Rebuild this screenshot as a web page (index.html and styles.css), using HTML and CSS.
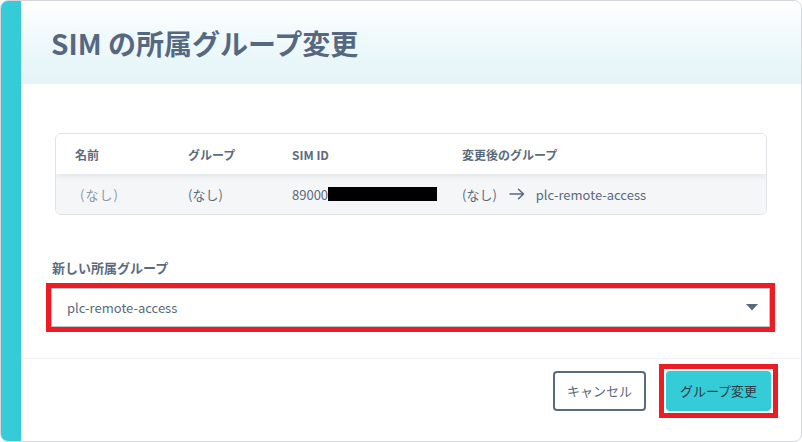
FILE: index.html
```html
<!DOCTYPE html>
<html lang="ja">
<head>
<meta charset="utf-8">
<title>SIM の所属グループ変更</title>
<link rel="stylesheet" href="styles.css">
</head>
<body>
<div class="modal">
  <div class="accent"></div>
  <div class="main">
    <header class="header">
      <h1 class="title">SIM の所属グループ変更</h1>
    </header>
    <section class="body">
      <div class="table">
        <div class="row head">
          <div class="cell">名前</div>
          <div class="cell">グループ</div>
          <div class="cell">SIM ID</div>
          <div class="cell">変更後のグループ</div>
        </div>
        <div class="row data">
          <div class="cell muted">(なし)</div>
          <div class="cell">(なし)</div>
          <div class="cell simid">89000<span class="redact"></span></div>
          <div class="cell change">(なし)<svg class="arrow" width="16" height="12" viewBox="0 0 16 12"><path d="M1 6H14.5M9.5 1.2L14.5 6L9.5 10.8" fill="none" stroke="#5a6a7c" stroke-width="1.5" stroke-linecap="round" stroke-linejoin="round"/></svg>plc-remote-access</div>
        </div>
      </div>
      <div class="field">
        <label class="label">新しい所属グループ</label>
        <div class="select-mark">
          <div class="select">
            <span>plc-remote-access</span>
            <svg class="caret" width="12" height="7" viewBox="0 0 12 7"><path d="M0 0H12L6 6.5Z" fill="#5a6a7c"/></svg>
          </div>
        </div>
      </div>
    </section>
    <footer class="footer">
      <button class="btn btn-cancel">キャンセル</button>
      <div class="btn-mark">
        <button class="btn btn-primary">グループ変更</button>
      </div>
    </footer>
  </div>
</div>
</body>
</html>
```
FILE: styles.css
```css
* { box-sizing: border-box; }
html, body { margin: 0; padding: 0; background: #ffffff; }
body {
  font-family: "Noto Sans CJK JP", "Noto Sans", sans-serif;
  color: #5a6a7c;
}
.modal {
  width: 802px;
  height: 442px;
  display: flex;
  border: 1px solid #d3d7dc;
  border-radius: 8px;
  overflow: hidden;
  background: #fff;
}
.accent {
  width: 20px;
  flex: none;
  background: #35ccd7;
}
.main {
  flex: 1;
  display: flex;
  flex-direction: column;
  min-width: 0;
}
.header {
  height: 83px;
  display: flex;
  align-items: center;
  padding-left: 30px;
  background: linear-gradient(180deg, #ffffff 0%, #f1fafc 40%, #e3f4f7 100%);
}
.title {
  margin: 0;
  font-size: 28px;
  font-weight: 700;
  line-height: 1;
  color: #566880;
}
.body {
  flex: 1;
  padding: 49px 30px 0 30px;
}
.table {
  margin: 0 4px;
  border: 1px solid #dfe3e8;
  border-radius: 6px;
  overflow: hidden;
}
.row {
  display: grid;
  grid-template-columns: 113px 104px 170px 1fr;
  padding-left: 19px;
  height: 40px;
  align-items: center;
}
.row.head {
  background: #fff;
  font-size: 12px;
  font-weight: 700;
  color: #5b6b7e;
  position: relative;
  z-index: 1;
  box-shadow: 0 2px 5px rgba(60, 70, 85, 0.10);
}
.row.data {
  background: #f5f6f8;
  font-size: 13px;
  color: #5a6a7c;
}
.cell { white-space: nowrap; }
.muted { color: #8d97a4; padding-left: 5px; letter-spacing: 1px; }
.simid { display: flex; align-items: center; }
.redact {
  display: inline-block;
  width: 109px;
  height: 14px;
  background: #000;
}
.change { display: flex; align-items: center; }
.arrow { margin: 0 11px 0 12px; }
.field { margin-top: 44px; }
.label {
  display: block;
  font-size: 13px;
  font-weight: 700;
  line-height: 18px;
  color: #5b6b7e;
  padding-left: 1px;
}
.select-mark {
  margin: 6px 0 0 -5px;
  width: 729px;
  border: 5px solid #ec1c24;
}
.select {
  height: 39px;
  border: 1px solid #b9c2cd;
  background: #fff;
  display: flex;
  align-items: center;
  justify-content: space-between;
  padding: 0 11px 0 15px;
  font-size: 13px;
  color: #5a6a7c;
}
.footer {
  border-top: 1px solid #eeeff1;
  height: 83px;
  display: flex;
  justify-content: flex-end;
  align-items: center;
  padding: 5px 23px 24px 0;
}
.btn {
  font-family: "Noto Sans CJK JP", "Noto Sans", sans-serif;
  font-size: 13px;
  height: 40px;
  border-radius: 4px;
  cursor: pointer;
  padding: 0;
}
.btn-cancel {
  width: 93px;
  margin-right: 13px;
  background: #fff;
  border: 2px solid #5b6b7e;
  color: #5a6a7c;
}
.btn-mark {
  border: 5px solid #ec1c24;
  padding: 2px;
  display: flex;
}
.btn-primary {
  width: 105px;
  background: #34ccd6;
  border: none;
  color: #2e3b48;
}
```
